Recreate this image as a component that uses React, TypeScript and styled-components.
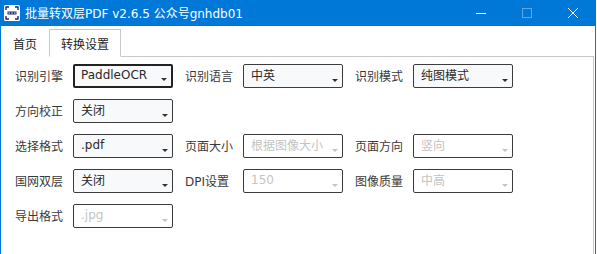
import React from "react"
import styled, { createGlobalStyle } from "styled-components"

const Global = createGlobalStyle`
html, body {
  margin:0;
  padding:0;
  background:#fff;
}
body {
  font-family:"DejaVu Sans","Noto Sans CJK SC",sans-serif;
  overflow:hidden;
}
`

const Window = styled.div`
width:596px;
height:254px;
box-sizing:border-box;
border-left:1px solid #0078d7;
border-right:1px solid #0078d7;
display:flex;
flex-flow:column nowrap;
background:#fff;
`

const TitleBar = styled.div`
height:26px;
margin:0 -1px;
background:#0078d7;
display:flex;
align-items:center;
color:#fff;
font-size:12px;
`

const Logo = styled.div`
width:16px;
height:16px;
margin:0 5px 0 4px;
display:flex;
`

const Title = styled.div`
flex:1;
white-space:nowrap;
padding-bottom:1px;
`

const Ctrl = styled.div<{ $dim?: boolean }>`
width:46px;
height:26px;
display:flex;
align-items:center;
justify-content:center;
opacity:${p => (p.$dim ? 0.35 : 1)};
`

const TabStrip = styled.div`
height:30px;
display:flex;
align-items:flex-end;
border-bottom:1px solid #c8c8c8;
margin-right:1px;
`

const Tab = styled.div<{ $active?: boolean }>`
height:${p => (p.$active ? "28px" : "26px")};
box-sizing:border-box;
display:flex;
align-items:center;
justify-content:center;
font-size:12px;
color:#1e1e1e;
font-family:"Noto Sans CJK SC",sans-serif;
background:#fff;
margin-bottom:-1px;
${p =>
  p.$active
    ? "width:72px; border:1px solid #c8c8c8; border-bottom:1px solid #fff; padding-top:1px;"
    : "width:48px; padding-bottom:2px;"}
`

const Panel = styled.div`
flex:1;
border-right:1px solid #c8c8c8;
margin-right:1px;
padding:7px 0 0 14px;
display:flex;
flex-flow:column nowrap;
gap:11px;
`

const Row = styled.div`
display:flex;
flex-flow:row nowrap;
`

const Field = styled.div`
width:170px;
display:flex;
align-items:center;
`

const Label = styled.div`
width:58px;
font-size:12px;
color:#3a3a3a;
white-space:nowrap;
padding-bottom:1px;
`

const Combo = styled.div<{ $disabled?: boolean; $focus?: boolean }>`
width:100px;
height:24px;
box-sizing:border-box;
border:${p => (p.$focus ? "2px solid #222" : "1px solid #3c3c3c")};
border-radius:2px;
background:${p => (p.$disabled ? "#fff" : "#f8f9fb")};
display:flex;
align-items:center;
padding:0 4px 0 ${p => (p.$focus ? "6px" : "7px")};
font-size:12px;
color:${p => (p.$disabled ? "#c4c4c4" : "#2a2a2a")};
`

const Value = styled.span`
flex:1;
white-space:nowrap;
overflow:hidden;
padding-bottom:3px;
`

const Arrow = styled.span<{ $disabled?: boolean }>`
align-self:flex-end;
margin-bottom:5px;
width:0;
height:0;
border-left:3px solid transparent;
border-right:3px solid transparent;
border-top:3px solid ${p => (p.$disabled ? "#c4c4c4" : "#333")};
`

type Opt = { label: string; value: string; disabled?: boolean; focus?: boolean }

const Select: React.FC<Opt> = ({ label, value, disabled, focus }) => (
  <Field>
    <Label>{label}</Label>
    <Combo $disabled={disabled} $focus={focus}>
      <Value>{value}</Value>
      <Arrow $disabled={disabled} />
    </Combo>
  </Field>
)

const rows: Opt[][] = [
  [
    { label: "识别引擎", value: "PaddleOCR", focus: true },
    { label: "识别语言", value: "中英" },
    { label: "识别模式", value: "纯图模式" },
  ],
  [{ label: "方向校正", value: "关闭" }],
  [
    { label: "选择格式", value: ".pdf" },
    { label: "页面大小", value: "根据图像大小", disabled: true },
    { label: "页面方向", value: "竖向", disabled: true },
  ],
  [
    { label: "国网双层", value: "关闭" },
    { label: "DPI设置", value: "150", disabled: true },
    { label: "图像质量", value: "中高", disabled: true },
  ],
  [{ label: "导出格式", value: ".jpg", disabled: true }],
]

const AppLogo = () => (
  <svg width="16" height="16" viewBox="0 0 16 16">
    <rect x="0" y="0" width="16" height="16" rx="1.5" fill="#fff" />
    <path d="M2 5V2h3M11 2h3v3M14 11v3h-3M5 14H2v-3" stroke="#1b2a6b" strokeWidth="1.4" fill="none" />
    <rect x="3.5" y="6.5" width="9" height="3" fill="#1b2a6b" />
    <rect x="4.5" y="7.5" width="1.5" height="1" fill="#fff" />
    <rect x="7.25" y="7.5" width="1.5" height="1" fill="#fff" />
    <rect x="10" y="7.5" width="1.5" height="1" fill="#fff" />
  </svg>
)

export default function App() {
  return (
    <>
      <Global />
      <Window>
        <TitleBar>
          <Logo><AppLogo /></Logo>
          <Title>批量转双层PDF v2.6.5 公众号gnhdb01</Title>
          <Ctrl>
            <svg width="10" height="10" viewBox="0 0 10 10"><path d="M0 5.5h10" stroke="#fff" strokeWidth="1" /></svg>
          </Ctrl>
          <Ctrl $dim>
            <svg width="10" height="10" viewBox="0 0 10 10"><rect x="0.5" y="0.5" width="9" height="9" stroke="#fff" fill="none" /></svg>
          </Ctrl>
          <Ctrl>
            <svg width="10" height="10" viewBox="0 0 10 10"><path d="M0 0L10 10M10 0L0 10" stroke="#fff" strokeWidth="1" /></svg>
          </Ctrl>
        </TitleBar>
        <TabStrip>
          <Tab>首页</Tab>
          <Tab $active>转换设置</Tab>
        </TabStrip>
        <Panel>
          {rows.map((r, i) => (
            <Row key={i}>
              {r.map(o => <Select key={o.label} {...o} />)}
            </Row>
          ))}
        </Panel>
      </Window>
    </>
  )
}
